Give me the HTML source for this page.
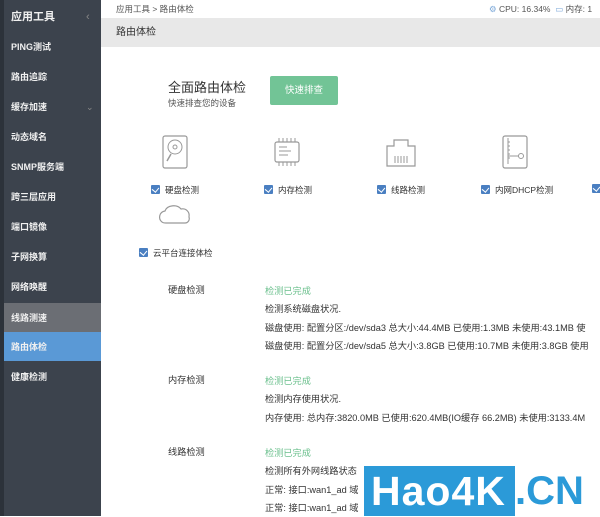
<!DOCTYPE html>
<html><head><meta charset="utf-8"><style>
*{margin:0;padding:0;box-sizing:border-box}
body{width:600px;height:516px;overflow:hidden;background:#fff;font-family:"Liberation Sans","Noto Sans CJK SC",sans-serif;color:#333;position:relative}
.sb{position:absolute;left:0;top:0;width:101px;height:516px;background:#3c434d;border-left:4px solid #2c323a}
.sb div{position:absolute;left:0;width:97px;height:30px;line-height:30px;padding-left:7px;font-size:9px;color:#f0f0f0;font-weight:bold}
.abs{position:absolute;white-space:nowrap}
.cb{display:inline-block;width:9px;height:9px;background:#4a7fc1;border-radius:1px;vertical-align:-1px;margin-right:5px;position:relative}
.cb:after{content:"";position:absolute;left:2px;top:1px;width:4px;height:5px;border:solid #fff;border-width:0 1.5px 1.5px 0;transform:rotate(40deg)}
.lbl{font-size:8.5px;color:#333}
.t{font-size:9.2px;color:#333}
.g{color:#6cc08e}
</style></head><body>
<div class="sb">
<div style="top:2px;height:30px;font-size:11px">应用工具<span style="position:absolute;left:82px;color:#888;font-weight:normal">&lsaquo;</span></div>
<div style="top:32px">PING测试</div>
<div style="top:62px">路由追踪</div>
<div style="top:92px">缓存加速<span style="position:absolute;left:82px;color:#888;font-weight:normal">&#8964;</span></div>
<div style="top:122px">动态域名</div>
<div style="top:152px">SNMP服务端</div>
<div style="top:182px">跨三层应用</div>
<div style="top:212px">端口镜像</div>
<div style="top:242px">子网换算</div>
<div style="top:272px">网络唤醒</div>
<div style="top:303px;background:#6b6e74;height:29px">线路测速</div>
<div style="top:332px;background:#5a99d6;height:29px">路由体检</div>
<div style="top:362px">健康检测</div>
</div>
<div class="abs" style="left:116px;top:3px;font-size:8.5px;color:#555">应用工具 &gt; 路由体检</div>
<div class="abs" style="left:489px;top:3px;font-size:8.5px;color:#555"><span style="color:#7aa7d8">⚙</span> CPU: 16.34% &nbsp;<span style="color:#7aa7d8">▭</span> 内存: 1</div>
<div class="abs" style="left:101px;top:18px;width:499px;height:29px;background:#e8e8e8;font-size:10px;line-height:29px;padding-left:15px">路由体检</div>
<div class="abs" style="left:168px;top:77px;font-size:13px;color:#333">全面路由体检</div>
<div class="abs" style="left:168px;top:97px;font-size:8.5px;color:#555">快速排查您的设备</div>
<div class="abs" style="left:270px;top:76px;width:68px;height:29px;background:#72c496;border-radius:2px;color:#fff;font-size:9.5px;line-height:29px;text-align:center">快速排查</div>
<svg class="abs" style="left:160px;top:134px" width="30" height="36"><rect x="3" y="2" width="24" height="32" rx="2" fill="none" stroke="#999" stroke-width="1.2"/><circle cx="15" cy="13" r="7" fill="none" stroke="#999"/><circle cx="15" cy="13" r="2" fill="none" stroke="#999"/><line x1="11" y1="20" x2="7" y2="27" stroke="#999" stroke-width="1.5"/></svg>
<svg class="abs" style="left:272px;top:134px" width="30" height="36"><rect x="3" y="8" width="24" height="20" rx="2" fill="none" stroke="#999" stroke-width="1.2"/><path d="M7 8V4M11 8V4M15 8V4M19 8V4M23 8V4M7 28v4M11 28v4M15 28v4M19 28v4M23 28v4M7 13h8M7 17h12M7 21h9" stroke="#999" fill="none"/></svg>
<svg class="abs" style="left:384px;top:134px" width="34" height="36"><path d="M3 12h7V6h14v6h7v20H3z" fill="none" stroke="#999" stroke-width="1.2"/><path d="M11 22v7M14 22v7M17 22v7M20 22v7M23 22v7" stroke="#999"/></svg>
<svg class="abs" style="left:500px;top:134px" width="30" height="36"><rect x="3" y="2" width="24" height="32" rx="2" fill="none" stroke="#999" stroke-width="1.2"/><path d="M8 4v26M8 8h2M8 12h2M8 16h2M8 20h2M8 24h2M8 22h11" stroke="#999" fill="none"/><circle cx="21" cy="22" r="2.5" fill="none" stroke="#999"/></svg>
<svg class="abs" style="left:157px;top:202px" width="36" height="26"><path d="M5 20c-4-3-3-10 3-11 2-6 12-7 16-2 5-1 9 3 8 8 1 3-1 6-4 6H9c-2 0-3 0-4-1z" fill="none" stroke="#999" stroke-width="1.2"/></svg>
<div class="abs lbl" style="left:151px;top:184px"><span class="cb"></span>硬盘检测</div>
<div class="abs lbl" style="left:264px;top:184px"><span class="cb"></span>内存检测</div>
<div class="abs lbl" style="left:377px;top:184px"><span class="cb"></span>线路检测</div>
<div class="abs lbl" style="left:481px;top:184px"><span class="cb"></span>内网DHCP检测</div>
<div class="abs lbl" style="left:592px;top:184px"><span class="cb"></span></div>
<div class="abs lbl" style="left:139px;top:247px"><span class="cb"></span>云平台连接体检</div>
<div class="abs t" style="left:168px;top:282px">硬盘检测</div>
<div class="abs t" style="left:265px;top:282px;line-height:18.3px"><span class="g">检测已完成</span><br>检测系统磁盘状况.<br>磁盘使用: 配置分区:/dev/sda3 总大小:44.4MB 已使用:1.3MB 未使用:43.1MB 使<br>磁盘使用: 配置分区:/dev/sda5 总大小:3.8GB 已使用:10.7MB 未使用:3.8GB 使用</div>
<div class="abs t" style="left:168px;top:372px">内存检测</div>
<div class="abs t" style="left:265px;top:372px;line-height:18.3px"><span class="g">检测已完成</span><br>检测内存使用状况.<br>内存使用: 总内存:3820.0MB 已使用:620.4MB(IO缓存 66.2MB) 未使用:3133.4M</div>
<div class="abs t" style="left:168px;top:444px">线路检测</div>
<div class="abs t" style="left:265px;top:444px;line-height:18.3px"><span class="g">检测已完成</span><br>检测所有外网线路状态<br>正常: 接口:wan1_ad 域<br>正常: 接口:wan1_ad 域</div>
<div class="abs" style="left:364px;top:466px;width:151px;height:50px;background:#2b9ad8;color:#fff;font-size:41px;font-weight:bold;line-height:50px;padding-left:7px;letter-spacing:1px">Hao4K</div>
<div class="abs" style="left:515px;top:466px;height:50px;color:#2b9ad8;font-size:40px;font-weight:bold;line-height:50px">.CN</div>
</body></html>
